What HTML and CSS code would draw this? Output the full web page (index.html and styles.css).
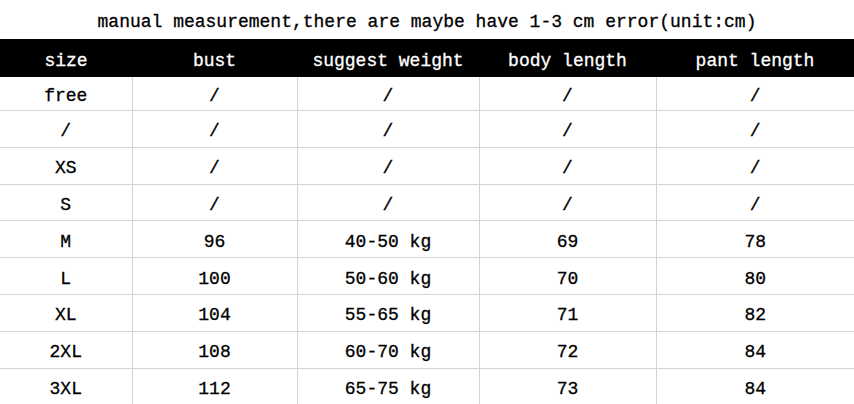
FILE: index.html
```html
<!DOCTYPE html>
<html>
<head>
<meta charset="utf-8">
<link rel="stylesheet" href="styles.css">
</head>
<body>
<div class="title">manual measurement,there are maybe have 1-3 cm error(unit:cm)</div>
<table class="sizes">
  <colgroup>
    <col class="c1"><col class="c2"><col class="c3"><col class="c4"><col class="c5">
  </colgroup>
  <thead>
    <tr><th>size</th><th>bust</th><th>suggest weight</th><th>body length</th><th>pant length</th></tr>
  </thead>
  <tbody>
    <tr class="first"><td>free</td><td>/</td><td>/</td><td>/</td><td>/</td></tr>
    <tr><td>/</td><td>/</td><td>/</td><td>/</td><td>/</td></tr>
    <tr><td>XS</td><td>/</td><td>/</td><td>/</td><td>/</td></tr>
    <tr><td>S</td><td>/</td><td>/</td><td>/</td><td>/</td></tr>
    <tr><td>M</td><td>96</td><td>40-50 kg</td><td>69</td><td>78</td></tr>
    <tr><td>L</td><td>100</td><td>50-60 kg</td><td>70</td><td>80</td></tr>
    <tr><td>XL</td><td>104</td><td>55-65 kg</td><td>71</td><td>82</td></tr>
    <tr><td>2XL</td><td>108</td><td>60-70 kg</td><td>72</td><td>84</td></tr>
    <tr class="last"><td>3XL</td><td>112</td><td>65-75 kg</td><td>73</td><td>84</td></tr>
  </tbody>
</table>
</body>
</html>
```
FILE: styles.css
```css
html, body {
  margin: 0;
  padding: 0;
  background: #fff;
}
body {
  width: 854px;
  height: 404px;
  overflow: hidden;
  font-family: "Liberation Mono", "DejaVu Sans Mono", monospace;
  font-size: 18px;
  color: #000;
}
.title {
  height: 39px;
  box-sizing: border-box;
  padding-top: 11px;
  line-height: 22px;
  text-align: center;
  white-space: pre;
  -webkit-text-stroke: 0.3px #000;
}
.sizes {
  width: 854px;
  border-collapse: collapse;
  table-layout: fixed;
}
.c1 { width: 132px; }
.c2 { width: 165px; }
.c3 { width: 182px; }
.c4 { width: 177px; }
.c5 { width: 198px; }
.sizes th {
  background: #000;
  color: #fff;
  font-weight: normal;
  height: 38px;
  padding: 6px 0 0;
  box-sizing: border-box;
  text-align: center;
  line-height: 20px;
  -webkit-text-stroke: 0.3px #fff;
}
.sizes td {
  height: 36.8px;
  padding: 5px 0 0;
  box-sizing: border-box;
  text-align: center;
  line-height: 20px;
  font-weight: normal;
  -webkit-text-stroke: 0.3px #000;
  border-bottom: 1px solid #d4d4d4;
  border-left: 1px solid #d4d4d4;
  white-space: pre;
}
.sizes td:first-child {
  border-left: none;
}
.sizes tr.first td {
  height: 33.5px;
}
.sizes tr.last td {
  border-bottom: none;
}
```
